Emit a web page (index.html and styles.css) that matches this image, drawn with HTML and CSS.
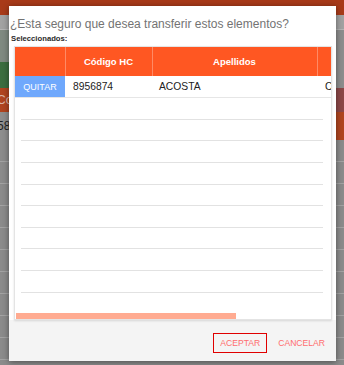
FILE: index.html
```html
<!DOCTYPE html>
<html lang="es">
<head>
<meta charset="utf-8">
<title>Transferir</title>
<link rel="stylesheet" href="styles.css">
</head>
<body>
<div class="page">
  <div class="topbar"></div>
  <div class="toolbar"></div>
  <div class="filters"></div>
  <div class="band band-green"></div>
  <div class="band band-head"><span>Co</span></div>
  <div class="band band-row"><span>58</span></div>
  <div class="grid-row"></div>
  <div class="grid-row"></div>
  <div class="grid-row"></div>
  <div class="grid-row"></div>
  <div class="grid-row"></div>
  <div class="grid-row"></div>
  <div class="grid-row"></div>
  <div class="grid-row"></div>
  <div class="grid-row"></div>
  <div class="grid-row"></div>
</div>

<div class="modal">
  <div class="modal-body">
    <h4 class="title">¿Esta seguro que desea transferir estos elementos?</h4>
    <div class="label">Seleccionados:</div>
    <div class="table-wrap">
      <table class="grid">
        <thead>
          <tr>
            <th class="c1"></th>
            <th class="c2">Código HC</th>
            <th class="c3">Apellidos</th>
            <th class="c4">Nombres</th>
          </tr>
        </thead>
        <tbody>
          <tr>
            <td class="c1"><span class="quitar">QUITAR</span></td>
            <td class="c2">8956874</td>
            <td class="c3">ACOSTA</td>
            <td class="c4">CARLOS</td>
          </tr>
        </tbody>
      </table>
      <div class="empty">
        <div class="line"></div>
        <div class="line"></div>
        <div class="line"></div>
        <div class="line"></div>
        <div class="line"></div>
        <div class="line"></div>
        <div class="line"></div>
        <div class="line"></div>
        <div class="line"></div>
      </div>
      <div class="hscroll"><div class="thumb"></div></div>
    </div>
  </div>
  <div class="modal-footer">
    <button class="btn btn-focus">ACEPTAR</button>
    <button class="btn">CANCELAR</button>
  </div>
</div>
</body>
</html>
```

FILE: styles.css
```css
* { box-sizing: border-box; }
html, body { margin: 0; padding: 0; }
body {
  width: 344px;
  height: 365px;
  overflow: hidden;
  position: relative;
  background: #8b8b8b;
  font-family: "Liberation Sans", Arial, sans-serif;
}

/* dimmed page behind the modal */
.page { display: flex; flex-direction: column; }
.topbar { height: 15px; background: #a83a19; }
.toolbar { height: 15px; background: #a2a2a2; border-bottom: 1px solid #b4b4b4; }
.filters { height: 32px; background: linear-gradient(to right, #7f8a80 50%, #8d8d8d 50%); }
.band { height: 26px; display: flex; align-items: center; font-size: 12px; }
.band-green { background: linear-gradient(to right, #3b6d3f 50%, #8d8d8d 50%); }
.band-head { height: 24px; background: linear-gradient(to right, #b0441f 50%, #8c4747 50%); color: #d9b4a6; }
.band-row { height: 28px; background: linear-gradient(to right, #8e8e8e 50%, #b0451f 50%); color: #1e1e1e; }
.band span { margin-left: -3px; }
.grid-row { height: 22px; border-bottom: 1px solid #a3a3a3; background: #8b8b8b; flex: none; }

/* modal */
.modal {
  position: absolute;
  left: 9px;
  top: 6px;
  width: 327px;
  height: 355px;
  background: #f4f4f4;
  box-shadow: 0 1px 6px rgba(0, 0, 0, 0.45);
  display: flex;
  flex-direction: column;
}
.modal-body {
  height: 314px;
  background: #ffffff;
  padding: 11px 4px 0 1px;
  display: flex;
  flex-direction: column;
}
.title {
  margin: 0;
  font-size: 12px;
  line-height: 14px;
  font-weight: normal;
  color: #737373;
}
.label {
  margin: 3px 0 0 1px;
  font-size: 7.7px;
  line-height: 10px;
  font-weight: bold;
  color: #2a2a2a;
}
.table-wrap {
  margin: 2px 0 0 4px;
  height: 274px;
  border: 1px solid #e4e4e4;
  box-shadow: 0 1px 2px rgba(0, 0, 0, 0.12);
  overflow: hidden;
  display: flex;
  flex-direction: column;
  background: #fff;
}
.grid {
  border-collapse: collapse;
  table-layout: fixed;
  width: 400px;
  flex: none;
}
.grid th {
  height: 29px;
  padding: 0;
  background: #ff5722;
  color: #fff;
  font-size: 9.5px;
  font-weight: bold;
  text-align: center;
  border-right: 1px solid #ff8a65;
}
.grid td {
  height: 21px;
  padding: 0;
  font-size: 10.3px;
  color: #222;
  border-bottom: 1px solid #e6e6e6;
  white-space: nowrap;
  overflow: hidden;
}
.grid .c1 { width: 50px; }
.grid .c2 { width: 87px; }
.grid .c3 { width: 165px; }
.grid .c4 { width: 98px; }
.grid td.c2 { padding-left: 8px; }
.grid td.c3 { padding-left: 7px; }
.grid td.c4 { padding-left: 8px; }
.quitar {
  display: flex;
  align-items: center;
  justify-content: center;
  height: 21px;
  background: #6fa8fc;
  color: #fff;
  font-size: 9px;
}
.empty { display: flex; flex-direction: column; flex: none; }
.line {
  height: 21.625px;
  margin: 0 8px 0 6px;
  border-bottom: 1px solid #e2e2e2;
}
.hscroll { margin-top: 20px; height: 6px; padding-left: 1px; flex: none; }
.thumb { width: 220px; height: 6px; background: #ffab91; }

.modal-footer {
  flex: 1;
  display: flex;
  justify-content: flex-end;
  align-items: flex-start;
  padding: 13px 4px 0 0;
  gap: 4px;
}
.btn {
  font-family: "Liberation Sans", Arial, sans-serif;
  font-size: 8.6px;
  color: #ff6d6d;
  background: transparent;
  border: 1px solid transparent;
  height: 20px;
  padding: 0 6px;
  margin: 0;
  line-height: 18px;
}
.btn-focus { border-color: #e00000; }
```
